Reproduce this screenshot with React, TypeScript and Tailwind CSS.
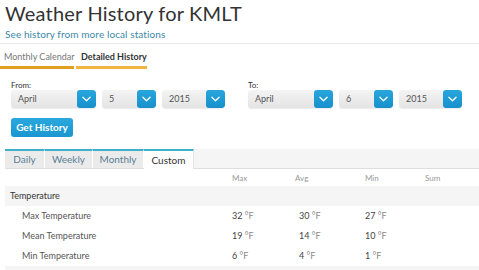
import React from "react"

const font = { fontFamily: 'Lato, "Open Sans", sans-serif' }

function Chevron() {
  return (
    <svg viewBox="0 0 10 6" className="w-[9px] h-[6px]" fill="none" stroke="white" strokeWidth="1.4" strokeLinecap="round" strokeLinejoin="round">
      <path d="M1 1l4 4 4-4" />
    </svg>
  )
}

function Select({ value, width }: { value: string; width: string }) {
  return (
    <div className={`flex h-[18px] ${width} rounded-[3px] overflow-hidden bg-gradient-to-b from-[#f4f4f4] to-[#e4e4e4] shadow-[0_1px_1px_rgba(0,0,0,0.08)]`}>
      <div className="flex-1 flex items-center pl-[7px] text-[9px] text-[#555]">{value}</div>
      <div className="w-[19px] flex items-center justify-center bg-gradient-to-b from-[#27a6dc] to-[#1790cc] rounded-[3px]">
        <Chevron />
      </div>
    </div>
  )
}

function DateGroup({ label, month, day, year }: { label: string; month: string; day: string; year: string }) {
  return (
    <div className="flex flex-col">
      <div className="text-[8px] leading-[10px] text-[#333]">{label}</div>
      <div className="flex gap-[6px]">
        <Select value={month} width="w-[85px]" />
        <Select value={day} width="w-[54px]" />
        <Select value={year} width="w-[63px]" />
      </div>
    </div>
  )
}

const rows = [
  { label: "Max Temperature", max: "32", avg: "30", min: "27" },
  { label: "Mean Temperature", max: "19", avg: "14", min: "10" },
  { label: "Min Temperature", max: "6", avg: "4", min: "1" },
]

function Temp({ v }: { v: string }) {
  return (
    <span className="text-[#444]">
      {v} <span className="text-[#8a8a8a]">°F</span>
    </span>
  )
}

export default function App() {
  return (
    <div className="w-[479px] h-[270px] overflow-hidden bg-white" style={font}>
      {/* Header */}
      <div className="px-[5px] pt-[1px]">
        <h1 className="text-[20px] leading-[24px] text-[#333] tracking-[0.2px]">Weather History for KMLT</h1>
        <a className="block mt-[2px] text-[10px] leading-[14px] text-[#3c88a8] tracking-[0.1px]">See history from more local stations</a>
      </div>
      <div className="mt-[2px] border-b border-[#e8e8e8]" />

      {/* Top tabs */}
      <div className="flex gap-[2px] mt-[6px] text-[9px] leading-[14px] whitespace-nowrap">
        <div className="w-[74px] pl-[4px] pb-[2px] border-b-[3px] border-[#dfa11f] text-[#777]">Monthly Calendar</div>
        <div className="w-[71px] pl-[5px] pb-[2px] border-b-[3px] border-[#f1b540] text-[#333] font-bold">Detailed History</div>
      </div>

      {/* Date range */}
      <div className="flex pl-[11px] mt-[11px]">
        <DateGroup label="From:" month="April" day="5" year="2015" />
        <div className="ml-[23px]">
          <DateGroup label="To:" month="April" day="6" year="2015" />
        </div>
      </div>

      <button className="block ml-[11px] mt-[10px] w-[62px] h-[19px] rounded-[3px] bg-gradient-to-b from-[#29a8de] to-[#1a96d0] text-white text-[10px] font-bold">
        Get History
      </button>

      {/* Period tabs */}
      <div className="ml-[5px] mt-[12px] flex h-[20px] bg-[#f5f5f5] border-b border-[#dedede] text-[10px]">
        <div className="w-[40px] flex items-center justify-center bg-[#ebebeb] border-t-2 border-[#3fb0cc] border-r border-r-white text-[#5a7f94]">Daily</div>
        <div className="w-[48px] flex items-center justify-center bg-[#ebebeb] border-t-2 border-[#3fb0cc] border-r border-r-white text-[#5a7f94]">Weekly</div>
        <div className="w-[51px] flex items-center justify-center bg-[#ebebeb] border-t-2 border-[#3fb0cc] border-r border-r-white text-[#5a7f94]">Monthly</div>
        <div className="w-[50px] flex items-center justify-center bg-white border-t-2 border-[#3fb0cc] border-r border-r-[#e4e4e4] text-[#333] h-[20px]">Custom</div>
      </div>

      {/* Table */}
      <div className="ml-[5px] text-[9px]">
        <div className="grid grid-cols-[227px_63px_70px_60px_1fr] h-[17px] items-center text-[8px] text-[#999]">
          <div />
          <div>Max</div>
          <div>Avg</div>
          <div>Min</div>
          <div>Sum</div>
        </div>
        <div className="h-[20px] flex items-center pl-[5px] bg-[#f5f5f5] text-[#333]">Temperature</div>
        {rows.map((r) => (
          <div key={r.label} className="grid grid-cols-[227px_63px_70px_60px_1fr] h-[20px] items-center">
            <div className="pl-[17px] text-[#555]">{r.label}</div>
            <div><Temp v={r.max} /></div>
            <div className="pl-[4px]"><Temp v={r.avg} /></div>
            <div><Temp v={r.min} /></div>
            <div />
          </div>
        ))}
        <div className="h-[6px] bg-[#f5f5f5]" />
      </div>
    </div>
  )
}
